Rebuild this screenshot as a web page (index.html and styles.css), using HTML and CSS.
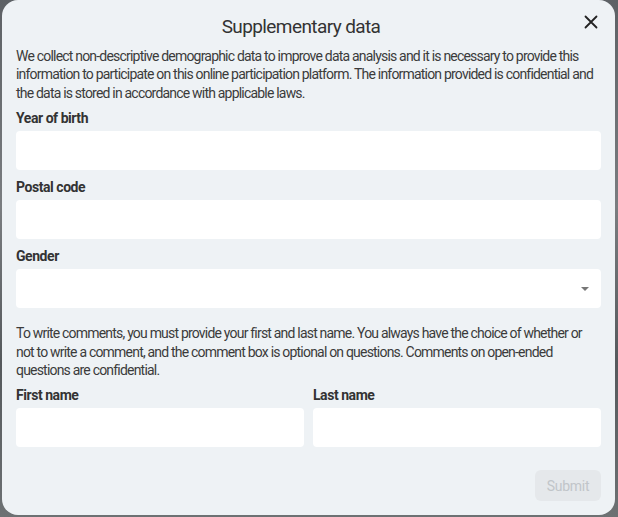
FILE: index.html
```html
<!DOCTYPE html>
<html lang="en">

<head>
  <meta charset="UTF-8">
  <meta name="viewport" content="width=device-width, initial-scale=1.0">
  <title>Supplementary data</title>
  <link rel="stylesheet" href="styles.css">
</head>

<body>

  <div class="dialog">
    <div class="dialog-head">
      <h2>Supplementary data</h2>
      <button class="close" type="button" aria-label="Close">
        <svg width="14" height="14" viewBox="0 0 14 14">
          <path d="M1.5 1.5 L12.5 12.5 M12.5 1.5 L1.5 12.5" stroke="#222" stroke-width="1.8" stroke-linecap="round" />
        </svg>
      </button>
    </div>

    <p class="intro">We collect non-descriptive demographic data to improve data analysis and it is necessary to provide this
      information to participate on this online participation platform. The information provided is confidential and
      the data is stored in accordance with applicable laws.</p>

    <div class="field">
      <label for="birth">Year of birth</label>
      <input type="text" id="birth">
    </div>

    <div class="field">
      <label for="postal">Postal code</label>
      <input type="text" id="postal">
    </div>

    <div class="field">
      <label for="gender">Gender</label>
      <div class="select">
        <select id="gender">
          <option value=""></option>
        </select>
      </div>
    </div>

    <p class="intro comments">To write comments, you must provide your first and last name. You always have the choice of whether or
      not to write a comment, and the comment box is optional on questions. Comments on open-ended
      questions are confidential.</p>

    <div class="row">
      <div class="field">
        <label for="first">First name</label>
        <input type="text" id="first">
      </div>
      <div class="field">
        <label for="last">Last name</label>
        <input type="text" id="last">
      </div>
    </div>

    <div class="actions">
      <button class="submit" type="button" disabled>Submit</button>
    </div>
  </div>

</body>

</html>
```

FILE: styles.css
```css
* {
  box-sizing: border-box;
}

body {
  margin: 0;
  height: 517px;
  overflow: hidden;
  background: linear-gradient(180deg, #5d6165 0%, #7a7d80 40%, #55595c 70%, #6d7173 100%);
  font-family: Roboto, "Liberation Sans", sans-serif;
  color: #333;
}

.dialog {
  margin: 0 3px 0 2px;
  height: 515px;
  background-color: #eef2f5;
  border-radius: 16px;
  padding: 0 14px 14px;
  display: flex;
  flex-direction: column;
}

.dialog-head {
  position: relative;
  padding-top: 15px;
}

.dialog-head h2 {
  margin: 0;
  padding-right: 15px;
  font-size: 19px;
  font-weight: normal;
  line-height: 24px;
  letter-spacing: -0.6px;
  text-align: center;
  color: #333;
}

.close {
  position: absolute;
  top: 14px;
  right: 2px;
  width: 16px;
  height: 16px;
  padding: 0;
  border: 0;
  background: none;
  display: flex;
  align-items: center;
  justify-content: center;
}

.intro {
  margin: 8px 0 7px;
  font-size: 14px;
  line-height: 18.4px;
  letter-spacing: -0.8px;
  color: #3b3b3b;
}

.intro.comments {
  margin-top: 8px;
}

.field {
  display: flex;
  flex-direction: column;
  margin-bottom: 8px;
}

.field label {
  font-size: 14px;
  font-weight: bold;
  line-height: 18px;
  letter-spacing: -0.45px;
  margin-bottom: 4px;
  color: #333;
}

.field input,
.field select {
  width: 100%;
  height: 39px;
  border: 0;
  border-radius: 4px;
  background-color: #fff;
  outline: none;
  font-family: inherit;
  font-size: 14px;
}

.select {
  position: relative;
}

.select select {
  appearance: none;
}

.select::after {
  content: "";
  position: absolute;
  right: 12px;
  top: 18px;
  border-left: 4px solid transparent;
  border-right: 4px solid transparent;
  border-top: 4px solid #777;
}

.row {
  display: flex;
  gap: 9px;
}

.row .field {
  flex: 1;
  margin-bottom: 0;
}

.actions {
  display: flex;
  justify-content: flex-end;
  margin-top: auto;
}

.submit {
  width: 66px;
  height: 31px;
  border: 0;
  border-radius: 6px;
  background-color: #e5e8eb;
  color: #c1c5c9;
  font-family: inherit;
  font-size: 14px;
  letter-spacing: -0.3px;
}
```
